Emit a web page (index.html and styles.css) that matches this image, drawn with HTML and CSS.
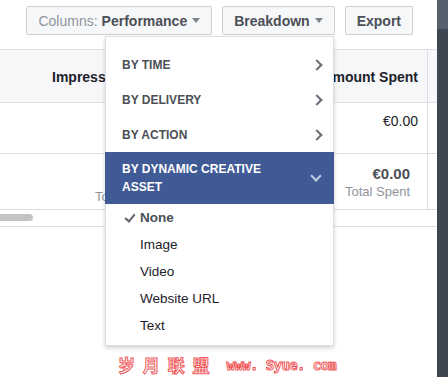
FILE: index.html
```html
<!DOCTYPE html>
<html lang="en">
<head>
  <meta charset="UTF-8" />
  <title>Ads Manager - Breakdown</title>
  <link rel="stylesheet" href="styles.css">
</head>
<body>
  <div class="page">
    <div class="main">
      <!-- Toolbar -->
      <div class="toolbar">
        <button class="tool-btn"><span class="muted">Columns:</span> Performance <span class="caret"></span></button>
        <button class="tool-btn">Breakdown <span class="caret"></span></button>
        <button class="tool-btn">Export</button>
      </div>

      <!-- Table -->
      <div class="table">
        <div class="row head">
          <div class="cell first">Impressions</div>
          <div class="cell amount">Amount Spent</div>
          <div class="cell end"></div>
        </div>
        <div class="row r1">
          <div class="cell first"></div>
          <div class="cell amount"><span class="value">€0.00</span></div>
          <div class="cell end"></div>
        </div>
        <div class="row r2">
          <div class="cell first total"><span class="sub">Total</span></div>
          <div class="cell amount total">
            <span class="value strong">€0.00</span>
            <span class="sub">Total Spent</span>
          </div>
          <div class="cell end"></div>
        </div>
        <div class="scroll-row"><div class="thumb"></div></div>
      </div>
    </div>
    <div class="side-bar"><div class="side-top"></div></div>
  </div>

  <!-- Breakdown menu -->
  <div class="menu">
    <div class="group">BY TIME <span class="chev-right"></span></div>
    <div class="group">BY DELIVERY <span class="chev-right"></span></div>
    <div class="group">BY ACTION <span class="chev-right"></span></div>
    <div class="group active">
      <span>BY DYNAMIC CREATIVE<br>ASSET</span>
      <span class="chev-down"></span>
    </div>
    <div class="option checked"><span class="check"></span>None</div>
    <div class="option">Image</div>
    <div class="option">Video</div>
    <div class="option">Website URL</div>
    <div class="option">Text</div>
  </div>

  <div class="watermark"><span class="cn">岁 月 联 盟</span><span class="url">www. Syue. com</span></div>
</body>
</html>
```

FILE: styles.css
```css
:root {
  --text-dark: #1d2129;
  --text-mid: #4b4f56;
  --text-muted: #90949c;
  --border: #dddfe2;
  --btn-bg: #f6f7f9;
  --btn-border: #ced0d4;
  --blue: #405a96;
  --side: #3d4651;
}

* {
  box-sizing: border-box;
}

body {
  margin: 0;
  font-family: 'Liberation Sans', Arial, sans-serif;
  color: var(--text-dark);
  background: #fff;
  width: 448px;
  height: 377px;
  overflow: hidden;
  position: relative;
}

.page {
  display: flex;
  height: 377px;
}

.main {
  flex: 1;
}

.side-bar {
  width: 11px;
  background: var(--side);
}

.side-top {
  height: 29px;
  background: #57616d;
}

/* Toolbar */
.toolbar {
  display: flex;
  justify-content: flex-end;
  gap: 10px;
  padding: 6px 24px 0 0;
  height: 49px;
}

.tool-btn {
  height: 29px;
  padding: 0 11px;
  background: var(--btn-bg);
  border: 1px solid var(--btn-border);
  border-radius: 2px;
  font-family: inherit;
  font-size: 14px;
  font-weight: bold;
  color: var(--text-mid);
  display: flex;
  align-items: center;
  gap: 4px;
}

.tool-btn .muted {
  color: var(--text-muted);
  font-weight: normal;
}

.caret {
  width: 0;
  height: 0;
  border-left: 4px solid transparent;
  border-right: 4px solid transparent;
  border-top: 5px solid #7f838a;
  margin-left: 1px;
}

/* Table */
.table {
  border-top: 1px solid var(--border);
}

.row {
  display: grid;
  grid-template-columns: 200px 1fr 10px;
  border-bottom: 1px solid var(--border);
}

.row.head {
  height: 53px;
  background: var(--btn-bg);
  font-weight: bold;
  color: var(--text-dark);
}

.row.r1 { height: 51px; }
.row.r2 { height: 56px; }

.cell {
  display: flex;
  align-items: center;
  justify-content: flex-end;
  padding-right: 9px;
  font-size: 14px;
}

.head .first {
  justify-content: flex-start;
  padding-left: 52px;
}

.head .cell {
  padding-top: 1px;
}

.cell.end {
  border-left: 1px solid var(--border);
  padding: 0;
}

.r1 .amount {
  align-items: flex-start;
  padding-top: 10px;
}

.cell.total {
  flex-direction: column;
  align-items: flex-end;
  justify-content: center;
  gap: 2px;
}

.cell.amount.total {
  padding-right: 17px;
}

.cell.first.total {
  align-items: flex-start;
  padding: 30px 0 0 95px;
}

.value {
  font-size: 14px;
  color: var(--text-dark);
}

.value.strong {
  font-weight: bold;
  font-size: 15px;
  color: var(--text-mid);
}

.sub {
  font-size: 13px;
  color: var(--text-muted);
}

.scroll-row {
  height: 17px;
  padding-top: 4px;
  border-bottom: 1px solid var(--border);
}

.thumb {
  width: 33px;
  height: 7px;
  background: #c4c4c4;
  border-radius: 0 4px 4px 0;
}

/* Breakdown menu */
.menu {
  position: absolute;
  left: 105px;
  top: 36px;
  width: 229px;
  padding: 10px 0 6px;
  background: #fff;
  border: 1px solid #dcdee1;
  box-shadow: 0 2px 4px rgba(0, 0, 0, 0.18);
}

.group {
  display: flex;
  align-items: center;
  justify-content: space-between;
  height: 35px;
  padding: 0 12px 0 16px;
  font-size: 12px;
  font-weight: bold;
  color: var(--text-mid);
}

.group.active {
  height: 52px;
  line-height: 18px;
  background: var(--blue);
  color: #fff;
  margin: 0 -1px;
  padding-left: 17px;
}

.chev-right {
  width: 8px;
  height: 8px;
  border-top: 2px solid #6a6e76;
  border-right: 2px solid #6a6e76;
  transform: rotate(45deg);
}

.chev-down {
  width: 8px;
  height: 8px;
  border-bottom: 2px solid #c4cde0;
  border-right: 2px solid #c4cde0;
  transform: rotate(45deg);
  margin: 0 2px 4px 0;
}

.option {
  position: relative;
  height: 27px;
  display: flex;
  align-items: center;
  padding-left: 34px;
  font-size: 13.5px;
  color: var(--text-dark);
}

.option.checked {
  font-weight: bold;
  color: var(--text-mid);
}

.check {
  position: absolute;
  left: 21px;
  top: 8px;
  width: 6px;
  height: 10px;
  border-right: 2px solid #5f636b;
  border-bottom: 2px solid #5f636b;
  transform: rotate(40deg);
}

/* Watermark */
.watermark {
  position: absolute;
  left: 118px;
  top: 355px;
  display: flex;
  align-items: center;
  gap: 15px;
  font-family: 'Noto Sans CJK SC', 'DejaVu Sans Mono', monospace;
  font-weight: bold;
  font-size: 17px;
  line-height: 20px;
  color: #fff;
  -webkit-text-stroke: 1px #f0595b;
}

.watermark .cn {
  letter-spacing: 2px;
}

.watermark .url {
  font-family: 'DejaVu Sans Mono', monospace;
  font-size: 14px;
  letter-spacing: -0.6px;
}
```
